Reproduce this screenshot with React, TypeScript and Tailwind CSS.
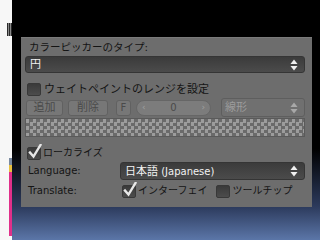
import React from "react";

const font = "font-['DejaVu_Sans','Noto_Sans_CJK_JP',sans-serif]";

function UpDown({ color = "#f0f0f0" }: { color?: string }) {
  return (
    <svg width="8" height="12" viewBox="0 0 8 12">
      <path d="M4 0.5 L7.5 5 L0.5 5 Z" fill={color} />
      <path d="M4 11.5 L7.5 7 L0.5 7 Z" fill={color} />
    </svg>
  );
}

function CheckBox({ checked }: { checked?: boolean }) {
  return (
    <div className="relative w-[14px] h-[13px] shrink-0">
      <div className="w-[14px] h-[13px] rounded-[2px] border border-[#383838] bg-[linear-gradient(to_bottom,#3a3a3a,#4c4c4c)]" />
      {checked && (
        <svg className="absolute left-[1px] top-[-3px]" width="14" height="15" viewBox="0 0 14 15">
          <path d="M2 8.5 L5.5 12.5 L12.5 1" stroke="#e8e8e8" strokeWidth="2.4" fill="none" strokeLinecap="square" />
        </svg>
      )}
    </div>
  );
}

function Dropdown({ children, className = "" }: { children: React.ReactNode; className?: string }) {
  return (
    <div
      className={`flex items-center justify-between rounded-[3px] border border-[#353535] bg-[linear-gradient(to_bottom,#3b3b3b,#4b4b4b)] pl-[4px] pr-[6px] text-[11px] text-[#f2f2f2] whitespace-nowrap ${className}`}
    >
      <span className="leading-none">{children}</span>
      <UpDown />
    </div>
  );
}

function Btn({ label, w, latin }: { label: string; w: string; latin?: boolean }) {
  return (
    <div
      className={`${w} h-[16px] flex items-center justify-center rounded-[3px] border border-[#616161] bg-[#777777] ${latin ? "text-[10px]" : "text-[11px]"} text-[#4a4a4a] leading-none`}
    >
      {label}
    </div>
  );
}

export default function App() {
  return (
    <div className={`w-[320px] h-[240px] flex overflow-hidden ${font}`}>
      {/* left white strip */}
      <div className="w-[12px] h-full bg-[#f7f7f7] flex flex-col items-end">
        <div className="mt-[23px] w-[5px] h-[13px] bg-[repeating-linear-gradient(to_right,#2a2a2a_0px,#2a2a2a_1px,#8a8a8a_1px,#8a8a8a_2px)]" />
        <div className="mt-[122px] w-[3px] h-[78px] flex flex-col">
          <div className="h-[7px] bg-[#7a8aa0]" />
          <div className="h-[7px] bg-[#e8c040]" />
          <div className="flex-1 bg-[#e0308a]" />
        </div>
      </div>

      {/* desktop area */}
      <div className="flex-1 h-full bg-[linear-gradient(to_bottom,#000_0%,#000_62%,#2c3a5c_86%,#5b76a8_100%)] pt-[37px] pl-[9px] pr-[8px]">
        <div className="h-[170px] bg-[#6d6d6d] border-t border-[#7a7a7a] pl-[4px] pr-[7px] flex flex-col text-[#141414] whitespace-nowrap">
          <div className="h-[18px] flex items-center pl-[4px] text-[10.5px] leading-none">
            カラーピッカーのタイプ:
          </div>
          <Dropdown className="h-[17px]">円</Dropdown>

          <div className="mt-[9px] h-[14px] flex items-center pl-[2px] gap-[3px] text-[11px] leading-none">
            <CheckBox />
            <span>ウェイトペイントのレンジを設定</span>
          </div>

          <div className="mt-[2px] h-[19px] flex items-center">
            <div className="ml-[1px]"><Btn label="追加" w="w-[37px]" /></div>
            <div className="ml-[5px]"><Btn label="削除" w="w-[40px]" /></div>
            <div className="ml-[8px]"><Btn label="F" w="w-[15px]" latin /></div>
            <div className="ml-[5px] w-[75px] h-[16px] rounded-full border border-[#666] bg-[#7c7c7c] flex items-center justify-between px-[5px] text-[10px] leading-none">
              <span className="text-[#a0a0a0] text-[9px]">‹</span>
              <span className="text-[#4a4a4a]">0</span>
              <span className="text-[#a0a0a0] text-[9px]">›</span>
            </div>
            <div className="ml-[10px] flex-1 h-[19px] rounded-[3px] border border-[#5e5e5e] bg-[#707070] flex items-center justify-between pl-[3px] pr-[6px] text-[11px] text-[#9c9c9c] leading-none">
              <span>線形</span>
              <UpDown color="#a8a8a8" />
            </div>
          </div>

          <div className="mt-[1px] h-[19px] border border-[#5a5a5a] bg-[#9a9a9a] bg-[conic-gradient(#6a6a6a_25%,#9c9c9c_0_50%,#6a6a6a_0_75%,#9c9c9c_0)] bg-[length:7px_7px]" />

          <div className="mt-[9px] h-[14px] flex items-center pl-[2px] gap-[2px] text-[10px] leading-none">
            <CheckBox checked />
            <span>ローカライズ</span>
          </div>

          <div className="mt-[2px] h-[18px] flex items-center text-[10px] leading-none">
            <div className="w-[95px] pl-[3px] shrink-0">Language:</div>
            <Dropdown className="flex-1 h-[18px]">
              <span className="text-[11px]">日本語</span>
              <span className="text-[10px]"> (Japanese)</span>
            </Dropdown>
          </div>

          <div className="mt-[3px] h-[16px] flex items-center leading-none">
            <div className="w-[97px] pl-[3px] shrink-0 text-[10px]">Translate:</div>
            <CheckBox checked />
            <span className="ml-[2px] text-[10px]">インターフェイ</span>
            <div className="ml-[9px]"><CheckBox /></div>
            <span className="ml-[2px] text-[10px]">ツールチップ</span>
          </div>
        </div>
      </div>
    </div>
  );
}
